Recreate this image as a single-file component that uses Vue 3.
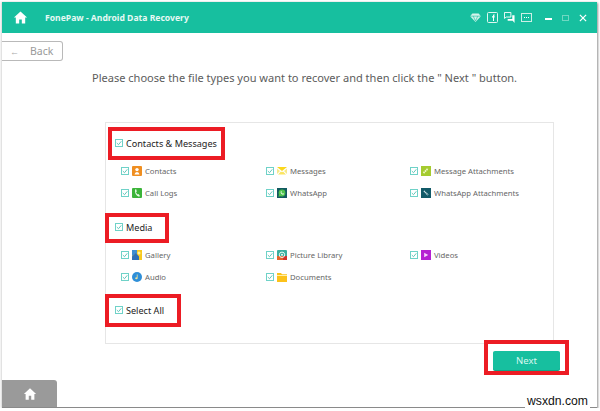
<script setup>
const groups = [
  { title: 'Contacts & Messages', cls: 'g1', items: [
    { label: 'Contacts', icon: 'contacts' }, { label: 'Messages', icon: 'messages' }, { label: 'Message Attachments', icon: 'attach' },
    { label: 'Call Logs', icon: 'calls' }, { label: 'WhatsApp', icon: 'whatsapp' }, { label: 'WhatsApp Attachments', icon: 'wattach' },
  ]},
  { title: 'Media', cls: 'g2', items: [
    { label: 'Gallery', icon: 'gallery' }, { label: 'Picture Library', icon: 'library' }, { label: 'Videos', icon: 'videos' },
    { label: 'Audio', icon: 'audio' }, { label: 'Documents', icon: 'docs' },
  ]},
]
</script>

<template>
  <div class="window">
    <header class="topbar">
      <svg class="home" viewBox="0 0 16 16" width="15" height="15"><path d="M8 1.500 1 8h2v6.500h3.600V10h2.800v4.500H13V8h2z" fill="#fff"/></svg>
      <span class="brand">FonePaw - Android Data Recovery</span>
      <div class="tools">
        <svg viewBox="0 0 12 10" width="11" height="9"><path d="M2.500.5h7L12 3.500 6 10 0 3.500z" fill="#d5f4ec"/><path d="M0 3.500h12M3.500 3.500 6 9l2.500-5.500" stroke="#17bf9f" stroke-width=".7" fill="none"/></svg>
        <svg viewBox="0 0 11 11" width="11" height="11"><rect x=".5" y=".5" width="10" height="10" rx="1" fill="none" stroke="#dff7f1"/><path d="M6 9V5.500H5V4.300h1V3.500Q6 2.300 7.500 2.300V3.400Q7 3.400 7 4v.3h.8L7.600 5.500H7V9z" fill="#fff"/></svg>
        <svg viewBox="0 0 12 12" width="11" height="11"><path d="M.5.500h7v5h-5l-2 1.500z" fill="none" stroke="#fff"/><path d="M4 7.500h5V3.500h2.500V12L9.500 9.500H4z" fill="#fff"/></svg>
        <svg viewBox="0 0 11 9" width="11" height="9"><rect x=".5" y=".5" width="10" height="8" fill="none" stroke="#cdeee6"/><path d="M3 4.500h1M5 4.500h1M7 4.500h1" stroke="#fff"/></svg>
        <span class="winctl">
          <span class="min"></span>
          <span class="max"></span>
          <svg viewBox="0 0 9 9" width="8" height="8"><path d="M1 1l7 7M8 1 1 8" stroke="#fff" stroke-width="1.400"/></svg>
        </span>
      </div>
    </header>

    <button class="back"><span class="arrow">←</span><span>Back</span></button>
    <p class="prompt">Please choose the file types you want to recover and then click the " Next " button.</p>

    <section class="panel">
      <div v-for="g in groups" :key="g.title" :class="['group', g.cls]">
        <label class="head"><span class="check"><svg viewBox="0 0 8 8" width="8" height="8"><path d="M1.800 4 3.500 5.700 6.300 2.300" fill="none" stroke="#3eb9a8" stroke-width=".8"/></svg></span><span class="mark">{{ g.title }}</span></label>
        <div class="grid">
          <div v-for="it in g.items" :key="it.label" class="item">
            <span class="check"><svg viewBox="0 0 8 8" width="8" height="8"><path d="M1.800 4 3.500 5.700 6.300 2.300" fill="none" stroke="#3eb9a8" stroke-width=".8"/></svg></span>
            <svg class="ico" viewBox="0 0 10 10" width="10" height="10">
              <template v-if="it.icon==='contacts'"><rect width="10" height="10" rx="1" fill="#ef8f22"/><circle cx="5" cy="3.600" r="1.700" fill="#fff"/><path d="M2.500 8.500q.3-2.500 2.500-2.500t2.500 2.500z" fill="#fff"/></template>
              <template v-else-if="it.icon==='messages'"><path d="M0 1h10L5 5z" fill="#fbd71c"/><path d="M0 2.500 3 5 0 8zM10 2.500 7 5l3 3z" fill="#f6e98a"/><path d="M1 8.500l3-3 1 .7 1-.7 3 3z" fill="#fbe560"/></template>
              <template v-else-if="it.icon==='attach'"><rect width="10" height="10" fill="#a5cb30"/><path d="M2.500 7 7 2.500" stroke="#eef7c8" stroke-width="1.800" stroke-dasharray="1.500 .6"/></template>
              <template v-else-if="it.icon==='calls'"><rect width="10" height="10" rx="1" fill="#3cb43a"/><path d="M3 1.500 4.200 1.300 4.800 3.600 4 4.300Q4.500 5.800 5.800 6.500L6.600 6 8 8 7 8.800Q2.500 7.500 3 1.500z" fill="#e8fbe5"/></template>
              <template v-else-if="it.icon==='whatsapp'"><rect width="10" height="10" fill="#125a60"/><circle cx="5" cy="5" r="3.400" fill="#4fc44c"/><path d="M1.400 8.800 2.200 6 4 8z" fill="#4fc44c"/><path d="M3.800 3.300 4.300 3.100 4.700 4 4.300 4.500Q4.800 5.400 5.600 5.700L6 5.300 6.900 5.700V6.200Q5.800 7 4.500 6 3.200 4.800 3.800 3.300z" fill="#fff"/></template>
              <template v-else-if="it.icon==='wattach'"><rect width="10" height="10" fill="#125a68"/><path d="M3 3 7 7" stroke="#d6e8ec" stroke-width="1.500" stroke-dasharray="1.200 .5"/></template>
              <template v-else-if="it.icon==='gallery'"><rect width="10" height="10" fill="#f8c91f"/><path d="M0 0h5v3.500L0 6z" fill="#3f8ed2"/><path d="M0 10V6.500L4 3l3 3.500V10z" fill="#2e6fb8"/><circle cx="7" cy="3" r="1.500" fill="#fff1a0"/></template>
              <template v-else-if="it.icon==='library'"><rect width="10" height="10" rx="1" fill="#3aaea0"/><path d="M0 6 10 6V10H0z" fill="#e2622c"/><path d="M6 6h4v4H6z" fill="#d2322c"/><circle cx="5" cy="4.800" r="2.700" fill="none" stroke="#e8fbf5" stroke-width="1"/><circle cx="5" cy="4.800" r="1" fill="#e8fbf5"/></template>
              <template v-else-if="it.icon==='videos'"><rect width="10" height="10" fill="#b520d2"/><path d="M3.200 2.800v4.400L7.200 5z" fill="#f6d5fb"/></template>
              <template v-else-if="it.icon==='audio'"><circle cx="5" cy="5" r="5" fill="#2f8fd8"/><path d="M5.600 2.500v3.800a1.200 1 0 1 1-.8-.9V2.500z" fill="#f3e59a"/></template>
              <template v-else><path d="M0 1h4l1 1.200h5V10H0z" fill="#fcc21b"/><rect y="3" width="10" height="1" fill="#fff1a8"/></template>
            </svg>
            <span class="label">{{ it.label }}</span>
          </div>
        </div>
      </div>
      <label class="head all"><span class="check"><svg viewBox="0 0 8 8" width="8" height="8"><path d="M1.800 4 3.500 5.700 6.300 2.300" fill="none" stroke="#3eb9a8" stroke-width=".8"/></svg></span><span class="mark">Select All</span></label>
    </section>

    <div class="actions"><button class="next">Next</button></div>

    <footer class="foot">
      <div class="tab"><svg viewBox="0 0 16 16" width="14" height="14"><path d="M8 1.500 1 8h2v6.500h3.600V10h2.800v4.500H13V8h2z" fill="#fff"/></svg></div>
    </footer>

    <span class="hl hl1"></span>
    <span class="hl hl2"></span>
    <span class="hl hl3"></span>
    <span class="hl hl4"></span>
  </div>
  <span class="wm">wsxdn.com</span>
</template>

<style scoped>
.window {
  position: relative;
  box-sizing: border-box;
  width: 595px;
  height: 406px;
  margin: 2px 0 0 2px;
  background: #fff;
  box-shadow: -1px 0 2px #d8d8d8, 1px 1px 2px #8f8f8f;
  font-family: "Noto Sans", "DejaVu Sans", sans-serif;
  display: flex;
  flex-direction: column;
}
.topbar {
  flex: none;
  height: 31px;
  background: #17bf9f;
  display: flex;
  align-items: center;
  padding: 0 10px 0 11px;
  color: #fff;
}
.brand { margin-left: 17px; font-size: 8.600px; font-weight: 700; color: #e6f9f4; }
.tools { margin-left: auto; display: flex; align-items: center; gap: 6px; }
.winctl { display: flex; align-items: center; gap: 10px; margin-left: 7px; }
.min { width: 7px; height: 2px; background: #fff; margin-top: 3px; }
.max { width: 5px; height: 4px; border: 1px solid #6fd8c2; }
.back {
  flex: none;
  align-self: flex-start;
  margin-top: 8px;
  width: 61px;
  height: 20px;
  padding: 0 0 0 8px;
  box-sizing: border-box;
  display: flex;
  align-items: center;
  gap: 11px;
  background: #fff;
  border: 1px solid #b9b9b9;
  border-left: 0;
  border-radius: 0 3px 3px 0;
  font: 10.500px "Noto Sans", sans-serif;
  color: #9a9a9a;
}
.arrow { font-size: 9px; color: #aaa; }
.prompt {
  margin: 10px 0 0 90px;
  font-size: 11.040px;
  line-height: 14px;
  color: #5c5c5c;
  white-space: nowrap;
}
.panel {
  flex: none;
  box-sizing: border-box;
  width: 449px;
  height: 222px;
  margin: 37px 0 0 103px;
  border: 1px solid #e6e6e6;
  padding: 12px 0 0 9px;
  display: flex;
  flex-direction: column;
}
.head { display: flex; align-items: center; gap: 3px; height: 16px; font-size: 9.100px; color: #222; }
.grid {
  display: grid;
  grid-template-columns: 145px 144px 1fr;
  grid-auto-rows: 22px;
  margin: 9px 0 0 6px;
}
.group.g2 { margin-top: 15px; }
.all { margin-top: 14px; }
.item { display: flex; align-items: center; }
.check {
  box-sizing: border-box;
  flex: none;
  width: 8px;
  height: 8px;
  border: 1px solid #6fd2c8;
  display: block;
  line-height: 0;
  background: #fff;
}
.check svg { margin: -1px; display: block; }
.ico { flex: none; margin-left: 3px; }
.label { margin-left: 3px; font-size: 7.700px; color: #666; white-space: nowrap; }
.actions { position: absolute; left: 491px; top: 345px; }
.next {
  width: 67px;
  height: 19px;
  border: 0;
  border-radius: 2px;
  background: #17bf9f;
  box-shadow: 0 1px 0 #0fa587;
  color: #d9f8f0;
  font: 9.500px "Noto Sans", sans-serif;
  padding: 0;
}
.foot { margin-top: auto; display: flex; height: 27px; border-bottom: 1px solid #8a8a8a; }
.tab {
  width: 55px;
  height: 27px;
  background: #9a9a9a;
  border-radius: 0 3px 0 0;
  display: flex;
  align-items: center;
  justify-content: center;
}
.hl { position: absolute; border: 4px solid #ec1c24; box-sizing: border-box; pointer-events: none; }
.hl1 { left: 106px; top: 125px; width: 117px; height: 33px; }
.hl2 { left: 103px; top: 211px; width: 64px; height: 30px; }
.hl3 { left: 103px; top: 292px; width: 76px; height: 33px; }
.hl4 { left: 482px; top: 338px; width: 85px; height: 35px; }
.wm {
  position: absolute;
  left: 525px;
  top: 393px;
  padding: 0 2px;
  background: #fff;
  font: 12.200px/16px "Liberation Sans", sans-serif;
  color: #111;
}
</style>
